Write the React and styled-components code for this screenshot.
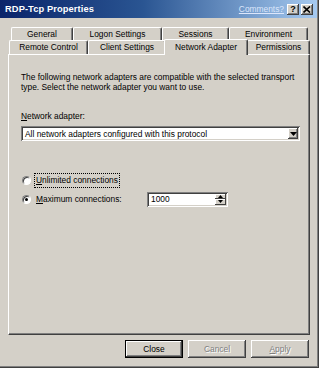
import React from 'react';
import styled, { createGlobalStyle } from 'styled-components';

const GlobalStyle = createGlobalStyle`
  html, body {
    margin: 0;
    padding: 0;
    background: #d4d0c8;
  }
  body {
    font-family: "Liberation Sans", Arial, sans-serif;
    font-size: 8.4px;
    color: #000;
  }
`;

const raised = `
  box-shadow: inset -1px -1px #404040, inset 1px 1px #fff, inset -2px -2px #808080, inset 2px 2px #d4d0c8;
`;

const sunken = `
  box-shadow: inset 1px 1px #808080, inset -1px -1px #fff, inset 2px 2px #404040, inset -2px -2px #d4d0c8;
`;

const topRowTabs = [
  { label: 'General', width: 62 },
  { label: 'Logon Settings', width: 89 },
  { label: 'Sessions', width: 67 },
  { label: 'Environment', width: 79 },
];

const bottomRowTabs = [
  { label: 'Remote Control', width: 79 },
  { label: 'Client Settings', width: 78 },
  { label: 'Network Adapter', width: 81, active: true },
  { label: 'Permissions', width: 63 },
];

const App = () => {
  return (
    <>
      <GlobalStyle />
      <Window>
        <TitleBar>
          <TitleText>RDP-Tcp Properties</TitleText>
          <CommentsLink>Comments?</CommentsLink>
          <CaptionButton>?</CaptionButton>
          <CaptionButton $close>
            <svg width="8" height="7" viewBox="0 0 8 7">
              <path d="M0.5 0.5 L7 6.5 M7 0.5 L0.5 6.5" stroke="#000" strokeWidth="1.6" />
            </svg>
          </CaptionButton>
        </TitleBar>

        <Body>
          <TabStrip>
            <TabRow $offset={3}>
              {topRowTabs.map((t) => (
                <Tab key={t.label} $width={t.width}>{t.label}</Tab>
              ))}
            </TabRow>
            <TabRow $offset={1} $lower>
              {bottomRowTabs.map((t) =>
                t.active ? (
                  <ActiveTab key={t.label} $width={t.width}>{t.label}</ActiveTab>
                ) : (
                  <Tab key={t.label} $width={t.width}>{t.label}</Tab>
                )
              )}
            </TabRow>
          </TabStrip>

          <Panel>
            <Description>
              The following network adapters are compatible with the selected transport
              type. Select the network adapter you want to use.
            </Description>

            <FieldLabel>
              <u>N</u>etwork adapter:
            </FieldLabel>
            <Select>
              <SelectValue>All network adapters configured with this protocol</SelectValue>
              <ArrowButton>
                <svg width="7" height="4" viewBox="0 0 7 4">
                  <path d="M0 0 H7 L3.5 4 Z" fill="#000" />
                </svg>
              </ArrowButton>
            </Select>

            <RadioGroup>
              <RadioRow>
                <Radio />
                <FocusLabel>
                  <u>U</u>nlimited connections
                </FocusLabel>
              </RadioRow>
              <RadioRow>
                <Radio $checked />
                <RadioLabel>
                  <u>M</u>aximum connections:
                </RadioLabel>
                <SpinBox>
                  <SpinValue>1000</SpinValue>
                  <SpinButtons>
                    <SpinButton>
                      <svg width="5" height="3" viewBox="0 0 5 3">
                        <path d="M2.5 0 L5 3 H0 Z" fill="#000" />
                      </svg>
                    </SpinButton>
                    <SpinButton>
                      <svg width="5" height="3" viewBox="0 0 5 3">
                        <path d="M0 0 H5 L2.5 3 Z" fill="#000" />
                      </svg>
                    </SpinButton>
                  </SpinButtons>
                </SpinBox>
              </RadioRow>
            </RadioGroup>
          </Panel>

          <ButtonRow>
            <DialogButton $default>Close</DialogButton>
            <DialogButton $disabled>Cancel</DialogButton>
            <DialogButton $disabled>
              <u>A</u>pply
            </DialogButton>
          </ButtonRow>
        </Body>
      </Window>
    </>
  );
};

const Window = styled.div`
  width: 319px;
  height: 368px;
  box-sizing: border-box;
  display: flex;
  flex-direction: column;
  background: #d4d0c8;
  border-right: 1px solid #404040;
  border-bottom: 1px solid #404040;
  box-shadow: inset -1px -1px #808080;
  padding: 0 1px 1px 0;
  overflow: hidden;
`;

const TitleBar = styled.div`
  height: 18px;
  flex-shrink: 0;
  display: flex;
  align-items: center;
  padding: 0 4px 0 5px;
  background: linear-gradient(to right, #0a246a 0%, #2a5592 45%, #a6caf0 100%);
`;

const TitleText = styled.div`
  flex: 1;
  color: #fff;
  font-weight: bold;
  font-size: 9.3px;
  letter-spacing: 0.1px;
`;

const CommentsLink = styled.span`
  color: #dce6fb;
  text-decoration: underline;
  font-size: 8.4px;
  margin-right: 3px;
`;

const CaptionButton = styled.div`
  width: 12px;
  height: 11px;
  display: flex;
  align-items: center;
  justify-content: center;
  background: #d4d0c8;
  font-weight: bold;
  font-size: 9px;
  margin-left: ${(p) => (p.$close ? '2px' : '0')};
  ${raised}
`;

const Body = styled.div`
  flex: 1;
  display: flex;
  flex-direction: column;
  padding: 9px 7px 0 8px;
`;

const TabStrip = styled.div`
  display: flex;
  flex-direction: column;
  position: relative;
  z-index: 1;
`;

const TabRow = styled.div`
  display: flex;
  padding-left: ${(p) => p.$offset}px;
  margin-top: ${(p) => (p.$lower ? '-1px' : '0')};
  height: 14px;
  align-items: flex-end;
`;

const Tab = styled.div`
  width: ${(p) => p.$width}px;
  height: 14px;
  box-sizing: border-box;
  display: flex;
  align-items: center;
  justify-content: center;
  background: #d4d0c8;
  border-top: 1px solid #fff;
  border-left: 1px solid #fff;
  border-right: 1px solid #404040;
  border-radius: 2px 2px 0 0;
  box-shadow: inset -1px 0 #808080;
  padding-bottom: 1px;
`;

const ActiveTab = styled(Tab)`
  height: 16px;
  width: ${(p) => p.$width + 3}px;
  margin: 0 -1px -1px -2px;
  position: relative;
  z-index: 2;
  padding-bottom: 2px;
`;

const Panel = styled.div`
  height: 281px;
  box-sizing: border-box;
  border-top: 1px solid #fff;
  border-left: 1px solid #fff;
  border-right: 1px solid #404040;
  border-bottom: 1px solid #404040;
  box-shadow: inset -1px -1px #808080;
  padding: 17px 10px 0 12px;
  display: flex;
  flex-direction: column;
`;

const Description = styled.p`
  margin: 0;
  line-height: 10px;
  width: 284px;
`;

const FieldLabel = styled.div`
  margin-top: 19px;
  line-height: 10px;
`;

const Select = styled.div`
  margin-top: 5px;
  height: 15px;
  width: 279px;
  box-sizing: border-box;
  display: flex;
  align-items: center;
  background: #fff;
  padding: 2px;
  ${sunken}
`;

const SelectValue = styled.div`
  flex: 1;
  padding-left: 2px;
  white-space: nowrap;
`;

const ArrowButton = styled.div`
  width: 10px;
  height: 11px;
  display: flex;
  align-items: center;
  justify-content: center;
  background: #d4d0c8;
  ${raised}
`;

const RadioGroup = styled.div`
  margin-top: 32px;
  display: flex;
  flex-direction: column;
  gap: 5px;
`;

const RadioRow = styled.div`
  display: flex;
  align-items: center;
  height: 14px;
`;

const Radio = styled.span`
  width: 9px;
  height: 9px;
  box-sizing: border-box;
  border-radius: 50%;
  background: #fff;
  border: 1px solid;
  border-color: #808080 #fff #fff #808080;
  box-shadow: inset 1px 1px #404040;
  margin: 0 4px 0 1px;
  position: relative;
  &::after {
    content: '';
    display: ${(p) => (p.$checked ? 'block' : 'none')};
    position: absolute;
    width: 3px;
    height: 3px;
    border-radius: 50%;
    background: #000;
    left: 2px;
    top: 2px;
  }
`;

const RadioLabel = styled.span`
  width: 110px;
  padding: 0 1px;
`;

const FocusLabel = styled.span`
  padding: 1px 1px 2px;
  outline: 1px dotted #000;
  outline-offset: 0;
  line-height: 10px;
`;

const SpinBox = styled.div`
  height: 15px;
  width: 81px;
  box-sizing: border-box;
  display: flex;
  align-items: center;
  background: #fff;
  padding: 2px;
  ${sunken}
`;

const SpinValue = styled.div`
  flex: 1;
  padding-left: 2px;
`;

const SpinButtons = styled.div`
  display: flex;
  flex-direction: column;
  width: 11px;
  height: 11px;
`;

const SpinButton = styled.div`
  flex: 1;
  display: flex;
  align-items: center;
  justify-content: center;
  background: #d4d0c8;
  box-shadow: inset -1px -1px #404040, inset 1px 1px #fff;
`;

const ButtonRow = styled.div`
  display: flex;
  justify-content: flex-end;
  gap: 5px;
  padding: 5px 1px 0 0;
`;

const DialogButton = styled.div`
  width: 58px;
  height: 18px;
  box-sizing: border-box;
  display: flex;
  align-items: center;
  justify-content: center;
  background: #d4d0c8;
  color: ${(p) => (p.$disabled ? '#808080' : '#000')};
  text-shadow: ${(p) => (p.$disabled ? '1px 1px #fff' : 'none')};
  border: ${(p) => (p.$default ? '1px solid #000' : 'none')};
  ${raised}
`;

export default App;
